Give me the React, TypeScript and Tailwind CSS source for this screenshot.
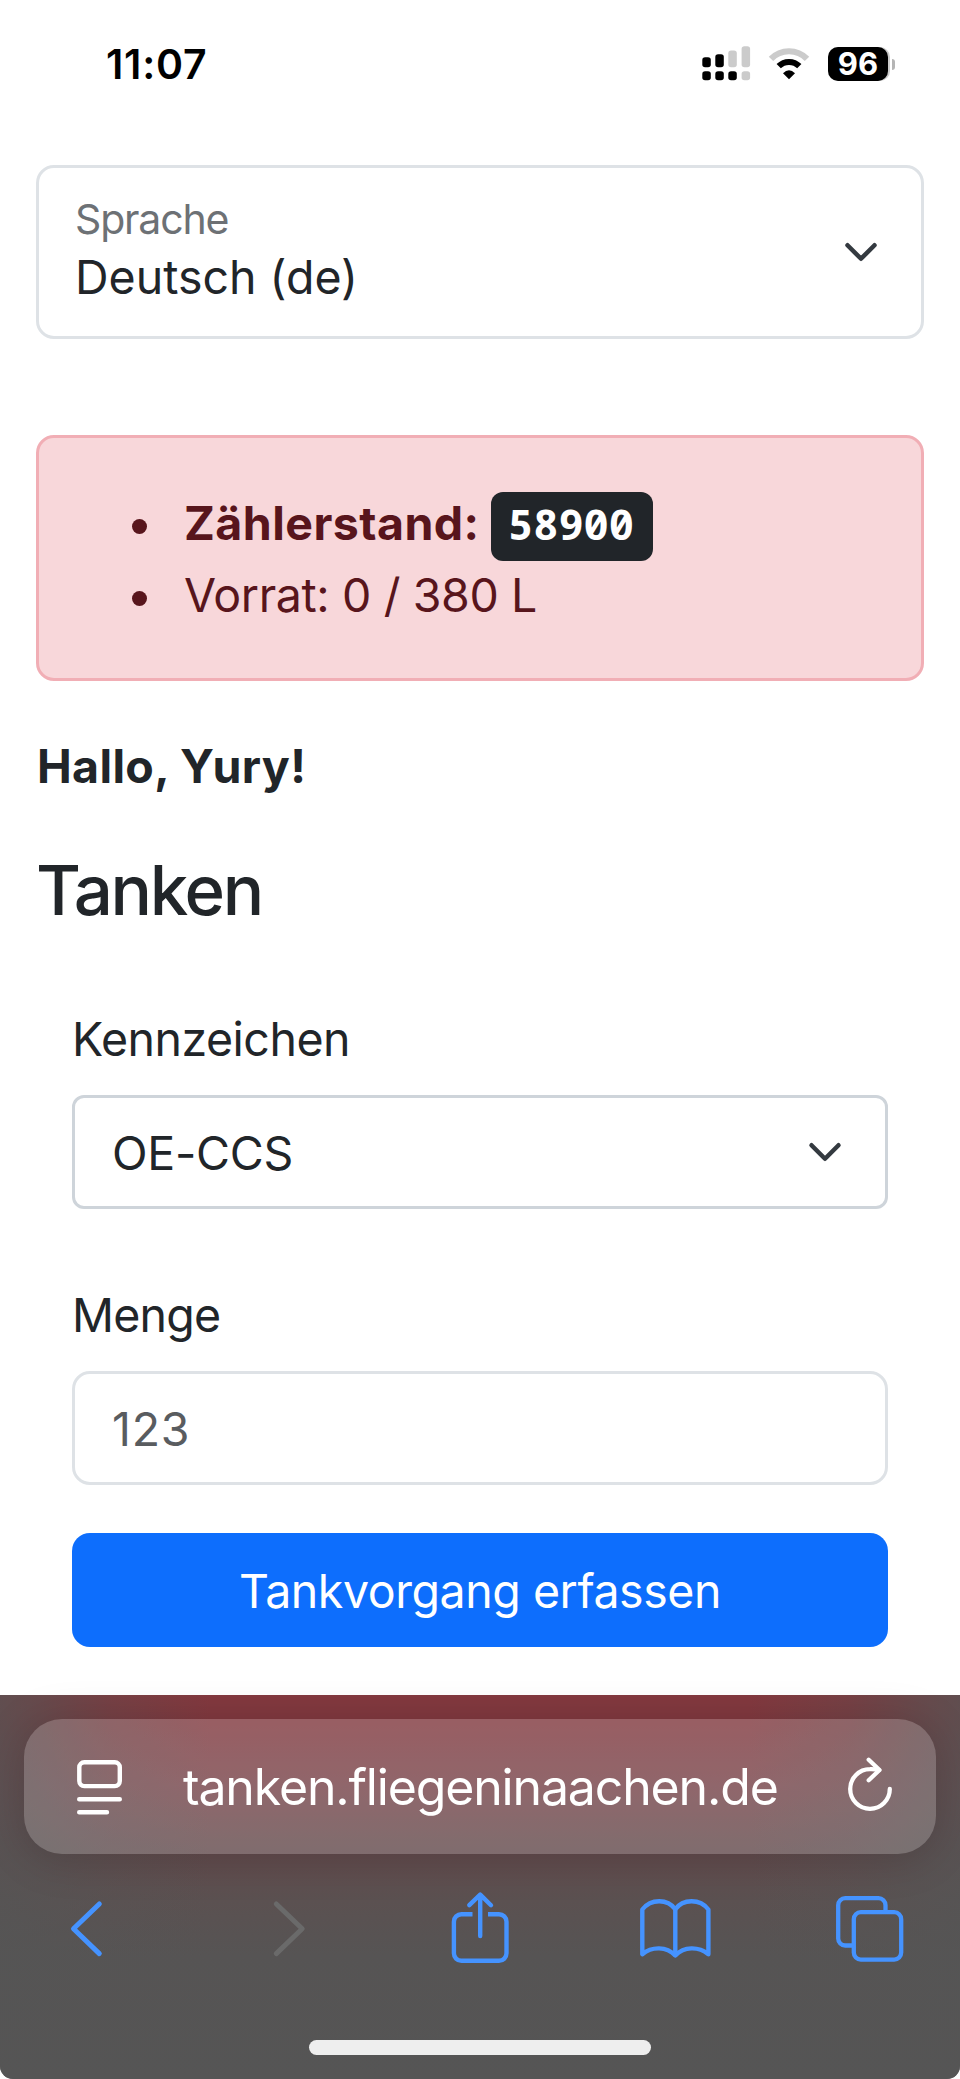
import type { ReactNode } from "react";

function StatusBar() {
  return (
    <header className="flex h-[128px] items-center pl-[106px] text-black">
      <span className="w-[596px] text-[41px] leading-[50px] font-semibold tracking-[0.75px]">11:07</span>
      <svg className="h-[36px] w-[50px] shrink-0" viewBox="0 0 50 36">
        <g fill="#000">
          <rect x="0.3" y="11.3" width="8.5" height="10" rx="2.8" />
          <rect x="13.3" y="8.3" width="8.5" height="13" rx="2.8" />
          <rect x="0.3" y="25.3" width="8.5" height="9" rx="2.8" />
          <rect x="13.3" y="25.3" width="8.5" height="9" rx="2.8" />
          <rect x="26.3" y="25.3" width="8.5" height="9" rx="2.8" />
        </g>
        <g fill="#cbcbcb">
          <rect x="26.3" y="4.5" width="8.5" height="16.8" rx="2.8" />
          <rect x="39.6" y="0.3" width="8.5" height="21" rx="2.8" />
          <rect x="39.6" y="25.3" width="8.5" height="9" rx="2.8" />
        </g>
      </svg>
      <svg className="ml-[16px] h-[34px] w-[42px] shrink-0" viewBox="0 0 42 34" fill="none">
        <path d="M3 11.9A25 25 0 0 1 39 11.9" stroke="#cbcbcb" strokeWidth="6.2" />
        <path d="M10.7 19.2A14.6 14.6 0 0 1 31.3 19.2" stroke="#000" strokeWidth="6" />
        <path d="M15 26.3Q21 20.3 27 26.3L21 32.2Z" fill="#000" />
      </svg>
      <div className="ml-[18px] flex h-[34px] w-[62px] items-center rounded-[10px] bg-[#cbcbcb] pr-[2px]">
        <div className="flex h-[34px] w-[60px] items-center justify-center rounded-[10px] bg-black text-[31px] leading-[34px] font-bold text-white">
          96
        </div>
      </div>
      <div className="ml-[2px] h-[11px] w-[3px] rounded-r-full bg-[#b5b5b5]" />
    </header>
  );
}

function Chevron() {
  return (
    <svg
      className="size-9 shrink-0"
      viewBox="0 0 16 16"
      fill="none"
      stroke="#343a40"
      strokeWidth="2"
      strokeLinecap="round"
      strokeLinejoin="round"
    >
      <path d="m2 5 6 6 6-6" />
    </svg>
  );
}

function Bullet() {
  return <span className="mt-[7px] mr-[37px] size-[15px] shrink-0 rounded-full bg-[#58151c]" />;
}

function Label({ children }: { children: ReactNode }) {
  return <label className="block text-[46.5px] leading-[72px]">{children}</label>;
}

function BrowserBar() {
  return (
    <footer className="relative mt-[48px] h-[384px] rounded-b-[13px] bg-[linear-gradient(to_bottom,#84393f_0px,#80393f_30px,#774349_90px,#634b4d_155px,#5b5151_205px,#565454_260px,#555555_384px)]">
      <div className="absolute inset-0 rounded-b-[13px] bg-[linear-gradient(to_right,rgba(85,85,85,0.75)_0px,rgba(85,85,85,0.6)_40px,rgba(85,85,85,0.28)_110px,transparent_210px,transparent_750px,rgba(85,85,85,0.28)_850px,rgba(85,85,85,0.6)_920px,rgba(85,85,85,0.75)_960px)]" />
      <div className="relative flex flex-col pt-[24px]">
        <div className="mx-[24px] flex h-[135px] items-center rounded-[38px] bg-white/19 pl-[52px] shadow-[0_4px_44px_rgba(0,0,0,0.17)]">
          <svg className="mt-px h-[56px] w-[47px] shrink-0" viewBox="0 0 47 56" fill="none" stroke="#fff" strokeWidth="4.4" strokeLinecap="round">
            <rect x="3.3" y="3.3" width="40.5" height="23.8" rx="5" />
            <path d="M3.2 40.2H43.8M3.2 53.2H31" />
          </svg>
          <span className="ml-[60px] w-[663px] text-[50px] leading-[60px] tracking-[-1.16px] whitespace-nowrap text-white">
            tanken.fliegeninaachen.de
          </span>
          <svg
            className="-mt-[3px] h-[60px] w-[48px] shrink-0"
            viewBox="0 0 48 60"
            fill="none"
            stroke="#fff"
            strokeWidth="4.3"
            strokeLinecap="round"
            strokeLinejoin="round"
          >
            <path d="M43.8 34A19.8 19.8 0 1 1 24 14.2Q28 14 33 15" />
            <path d="M22.7 4.8 33.5 15 22.7 25.2" />
          </svg>
        </div>
        <nav className="mt-[36px] flex h-[76px] text-[#4593ff]">
          <svg className="ml-[66px] h-[76px] w-[40px]" viewBox="0 0 40 76" fill="none" stroke="currentColor" strokeWidth="5" strokeLinecap="round" strokeLinejoin="round">
            <path d="M33.3 14 7.5 38.7 33.3 63.6" />
          </svg>
          <svg className="ml-[163px] h-[76px] w-[40px]" viewBox="0 0 40 76" fill="none" stroke="#6a6a6a" strokeWidth="5" strokeLinecap="round" strokeLinejoin="round">
            <path d="M7.3 14 33.2 38.7 7.3 63.6" />
          </svg>
          <svg className="ml-[141px] h-[76px] w-[60px]" viewBox="0 0 60 76" fill="none" stroke="currentColor" strokeWidth="4.4" strokeLinejoin="round">
            <path d="M22.5 24.2H11.4a7.5 7.5 0 0 0-7.5 7.5V63.3a7.5 7.5 0 0 0 7.5 7.5H49a7.5 7.5 0 0 0 7.5-7.5V31.7a7.5 7.5 0 0 0-7.5-7.5H38" />
            <path d="M30.2 46V5M19.3 15.2 30.2 4.6 41 15.2" strokeLinecap="round" />
          </svg>
          <svg className="ml-[128px] h-[76px] w-[76px]" viewBox="0 0 76 76" fill="none" stroke="currentColor" strokeWidth="4.4" strokeLinecap="round" strokeLinejoin="round">
            <path d="M4.3 19.5C13 8.6 29.5 8.6 37.3 19.3C45 8.6 62 8.6 70.4 19.5V64.2C60.5 56.2 46 56.2 37.3 65.4C28.5 56.2 14 56.2 4.3 64.2Z" />
            <path d="M37.3 19.5V65" />
          </svg>
          <svg className="ml-[120px] h-[76px] w-[72px]" viewBox="0 0 72 76" fill="none" stroke="currentColor" strokeWidth="4.3">
            <rect x="19.8" y="22.2" width="47.4" height="47.4" rx="7" />
            <path d="M51.5 22V15.2a7 7 0 0 0-7-7H11.2a7 7 0 0 0-7 7V48.5a7 7 0 0 0 7 7H19.8" />
          </svg>
        </nav>
        <div className="mx-auto mt-[74px] h-[15px] w-[342px] rounded-full bg-[#eeeeee]" />
      </div>
    </footer>
  );
}

export default function App() {
  return (
    <div className="h-[2079px] w-[960px] overflow-hidden bg-white font-['Inter','Liberation_Sans',sans-serif] text-[#212529]">
      <StatusBar />
      <main className="px-[36px] pt-[37px]">
        <div className="flex h-[174px] items-center rounded-[18px] border-3 border-[#dee2e6] pr-[42px] pl-[36px]">
          <div className="-mt-[8px] flex-1">
            <div className="text-[41px] leading-[58px] tracking-[-1.17px] text-[#6d7175]">Sprache</div>
            <div className="text-[46.5px] leading-[58px]">Deutsch (de)</div>
          </div>
          <Chevron />
        </div>

        <ul className="mt-[96px] h-[246px] rounded-[18px] border-3 border-[#f1aeb5] bg-[#f8d7da] pt-[49px] pl-[93px] text-[46.5px] leading-[72px] text-[#58151c]">
          <li className="flex h-[72px] items-center">
            <Bullet />
            <strong className="w-[307px] font-bold tracking-[0.45px] whitespace-nowrap">Zählerstand:</strong>
            <code className="mt-[7px] h-[69px] w-[162px] shrink-0 rounded-[12px] bg-[#212529] pr-[2px] text-center font-['Noto_Sans_Mono','DejaVu_Sans_Mono',monospace] text-[42px] leading-[63px] font-bold text-white">
              58900
            </code>
          </li>
          <li className="flex h-[72px] items-center tracking-[-0.39px]">
            <Bullet />
            Vorrat: 0 / 380 L
          </li>
        </ul>

        <p className="mt-[49px] ml-px text-[46.5px] leading-[72px] font-bold tracking-[0.35px]">Hallo, Yury!</p>
        <h1 className="mt-[45px] text-[69px] leading-[86px] font-medium tracking-[-2.3px]">Tanken</h1>

        <form className="mt-[70px] px-[36px]">
          <div className="tracking-[-0.5px]">
            <Label>Kennzeichen</Label>
          </div>
          <div className="mt-[20px] flex h-[114px] items-center rounded-[12px] border-3 border-[#ced4da] pr-[42px] pl-[37px]">
            <span className="flex-1 pt-[2px] text-[46.5px] leading-[72px] tracking-[-0.27px]">OE-CCS</span>
            <Chevron />
          </div>
          <div className="mt-[70px] tracking-[-0.78px]">
            <Label>Menge</Label>
          </div>
          <input
            className="mt-[20px] block h-[114px] w-full rounded-[18px] border-3 border-[#dee2e6] pt-[2px] pl-[37px] text-[46.5px] leading-[72px] tracking-[0.8px] placeholder:text-[#595c5f]"
            placeholder="123"
          />
          <button
            type="button"
            className="mt-[48px] block h-[114px] w-full rounded-[18px] bg-[#0d6efd] pt-[2px] text-center text-[46.5px] leading-[72px] tracking-[-0.44px] text-white"
          >
            Tankvorgang erfassen
          </button>
        </form>
      </main>
      <BrowserBar />
    </div>
  );
}
